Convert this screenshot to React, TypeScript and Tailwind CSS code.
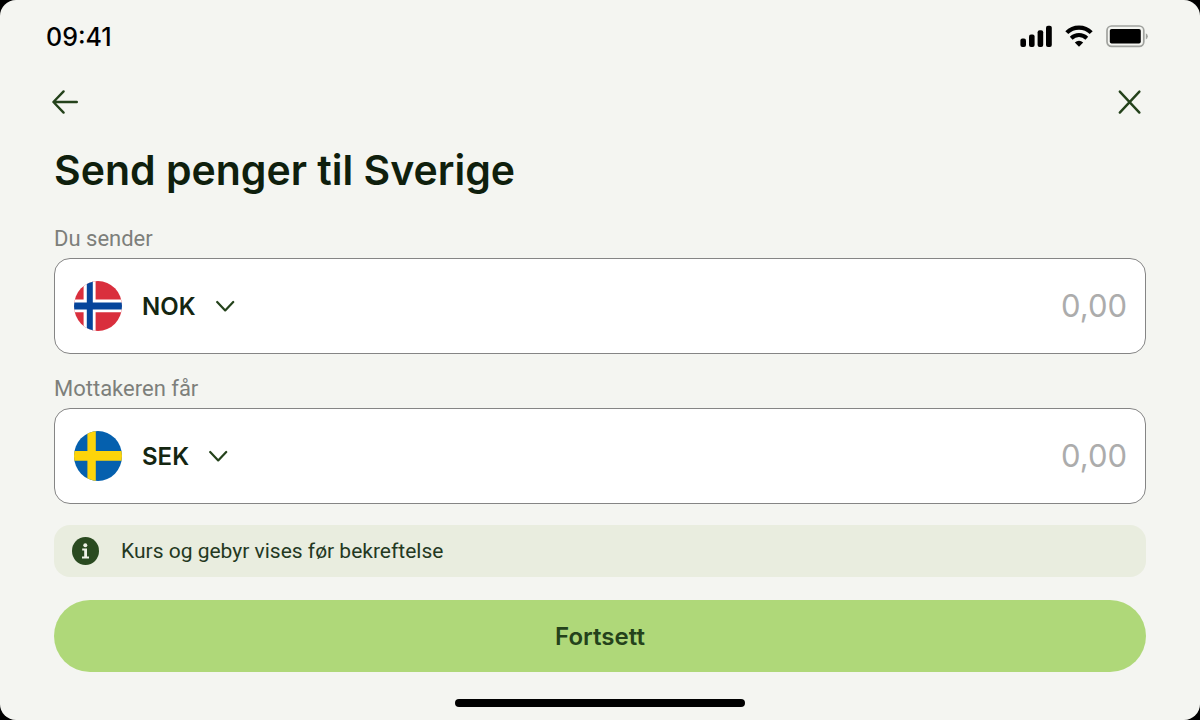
import { useState } from "react";
import type { ReactNode } from "react";

function SignalIcon() {
  return (
    <svg className="h-6 w-8" viewBox="0 0 32 24" fill="currentColor" aria-hidden="true">
      <rect x="0.4" y="14.6" width="5.6" height="8.4" rx="2" />
      <rect x="9" y="10.6" width="5.6" height="12.4" rx="2" />
      <rect x="17.6" y="6.2" width="5.6" height="16.8" rx="2" />
      <rect x="26" y="1.8" width="5.8" height="21.2" rx="2" />
    </svg>
  );
}

function WifiIcon() {
  return (
    <svg className="h-6 w-7" viewBox="0 0 28 24" fill="none" stroke="currentColor" aria-hidden="true">
      <path d="M1.8 8.6C8.4 1.9 19.6 1.9 26.2 8.6" strokeWidth="4.2" />
      <path d="M6.2 14.2C10.6 10 17.4 10 21.8 14.2" strokeWidth="4" />
      <path d="M14 22.8L9.8 18.4Q14 15 18.2 18.4Z" fill="currentColor" stroke="none" />
    </svg>
  );
}

function BatteryIcon() {
  return (
    <svg className="h-6 w-[42px]" viewBox="0 0 42 24" aria-hidden="true">
      <rect x="1" y="2" width="36.8" height="20.4" rx="4.6" fill="none" stroke="#a0a29e" strokeWidth="1.7" />
      <rect x="3.8" y="5" width="31" height="14.6" rx="1.8" fill="#000" />
      <path d="M39.8 9.2Q41.8 10 41.8 12.3T39.8 15.4Z" fill="#a0a29e" />
    </svg>
  );
}

function NorwayFlag() {
  return (
    <svg className="h-[50px] w-12" viewBox="0 0 48 50" aria-hidden="true">
      <clipPath id="norway">
        <ellipse cx="24" cy="25" rx="24" ry="25" />
      </clipPath>
      <g clipPath="url(#norway)">
        <path fill="#d92f3d" d="M0 0H48V50H0Z" />
        <path fill="#fff" d="M9.6 0H21.6V50H9.6ZM0 18.4H48V31.2H0Z" />
        <path fill="#06459b" d="M12.8 0H18.8V50H12.8ZM0 21.6H48V28.4H0Z" />
      </g>
    </svg>
  );
}

function SwedenFlag() {
  return (
    <svg className="h-[50px] w-12" viewBox="0 0 48 50" aria-hidden="true">
      <clipPath id="sweden">
        <ellipse cx="24" cy="25" rx="24" ry="25" />
      </clipPath>
      <g clipPath="url(#sweden)">
        <path fill="#0560ae" d="M0 0H48V50H0Z" />
        <path fill="#fdd40a" d="M13.4 0H21.8V50H13.4ZM0 20H48V29.8H0Z" />
      </g>
    </svg>
  );
}

type MoneyFieldProps = {
  id: string;
  label: string;
  flag: ReactNode;
  currency: string;
};

function MoneyField({ id, label, flag, currency }: MoneyFieldProps) {
  const [amount, setAmount] = useState("");
  return (
    <div className="flex flex-col">
      <label htmlFor={id} className="pt-px font-['Roboto',sans-serif] text-[22px] leading-8 text-[#7d7f7b]">
        {label}
      </label>
      <div className="mt-[3px] flex h-24 items-center rounded-2xl border border-[#858585] bg-white pr-[18px] pl-[19px]">
        {flag}
        <div className="ml-5 grid items-center text-[#142611]">
          <select
            aria-label={`${label}, valuta`}
            defaultValue={currency}
            className="col-start-1 row-start-1 field-sizing-content appearance-none bg-transparent pt-px pr-10 text-2xl leading-8 font-semibold outline-none"
          >
            <option>NOK</option>
            <option>SEK</option>
          </select>
          <svg
            className="pointer-events-none col-start-1 row-start-1 h-3 w-5 justify-self-end"
            viewBox="0 0 20 12"
            fill="none"
            stroke="#24421b"
            strokeWidth="2.2"
            strokeLinecap="round"
            strokeLinejoin="round"
            aria-hidden="true"
          >
            <path d="M1.2 2L9.2 10.4L17.2 2" />
          </svg>
        </div>
        <input
          id={id}
          inputMode="decimal"
          placeholder="0,00"
          value={amount}
          onChange={(e) => setAmount(e.target.value)}
          className="min-w-0 flex-1 bg-transparent text-right text-[31px] leading-10 text-[#142611] outline-none placeholder:text-[#acacac]"
        />
      </div>
    </div>
  );
}

export default function App() {
  return (
    <div className="min-h-screen bg-black font-['Inter',sans-serif]">
      <div className="flex min-h-screen flex-col rounded-2xl bg-[#f4f5f1]">
        <header className="flex items-end justify-between pt-5 pr-[52px] pl-[46px] text-black">
          <time className="pt-px text-[25px] leading-8 font-medium">09:41</time>
          <div className="flex items-center gap-[13px] pb-[5px]">
            <SignalIcon />
            <WifiIcon />
            <BatteryIcon />
          </div>
        </header>

        <main className="flex flex-1 flex-col px-[54px] pt-[31px]">
          <nav className="flex items-center justify-between text-[#24421b]">
            <button type="button" aria-label="Tilbake" className="-ml-1">
              <svg className="size-9" viewBox="0 0 36 36" fill="none" stroke="currentColor" strokeWidth="2.4" strokeLinecap="round" strokeLinejoin="round" aria-hidden="true">
                <path d="M26.8 18H3.6M13.6 7.4L3.4 18L13.6 28.6" />
              </svg>
            </button>
            <button type="button" aria-label="Lukk">
              <svg className="size-9" viewBox="0 0 36 36" fill="none" stroke="currentColor" strokeWidth="2.4" strokeLinecap="round" aria-hidden="true">
                <path d="M9.8 7.6L29.4 28.6M29.4 7.6L9.8 28.6" />
              </svg>
            </button>
          </nav>

          <h1 className="mt-6 text-[41px] leading-[52px] font-semibold text-[#0f1f0d]">
            Send penger til Sverige
          </h1>

          <form className="mt-[26px] flex flex-col" onSubmit={(e) => e.preventDefault()}>
            <div className="flex flex-col gap-[18px]">
              <MoneyField id="send" label="Du sender" flag={<NorwayFlag />} currency="NOK" />
              <MoneyField id="receive" label="Mottakeren får" flag={<SwedenFlag />} currency="SEK" />
            </div>

            <p className="mt-[21px] flex h-[52px] items-center gap-[22px] rounded-2xl bg-[#e9eddf] px-[18px] font-['Roboto',sans-serif] text-[21px] leading-8 text-[#24391f]">
              <svg className="h-7 w-[27px]" viewBox="0 0 27 28" aria-hidden="true">
                <ellipse cx="13.5" cy="14" rx="13.5" ry="14" fill="#2a4a20" />
                <circle cx="13.3" cy="8.2" r="2" fill="#eef2e6" />
                <path fill="#eef2e6" d="M10.2 11.6H15V19.6H17V21.4H10V19.6H12.2V13.4H10.2Z" />
              </svg>
              Kurs og gebyr vises før bekreftelse
            </p>

            <button
              type="submit"
              className="mt-[23px] h-[72px] rounded-full bg-[#afd879] pt-[2px] text-2xl leading-8 font-semibold text-[#24421b]"
            >
              Fortsett
            </button>
          </form>
        </main>

        <div className="mb-[13px] h-2 w-[290px] self-center rounded-full bg-black" />
      </div>
    </div>
  );
}
